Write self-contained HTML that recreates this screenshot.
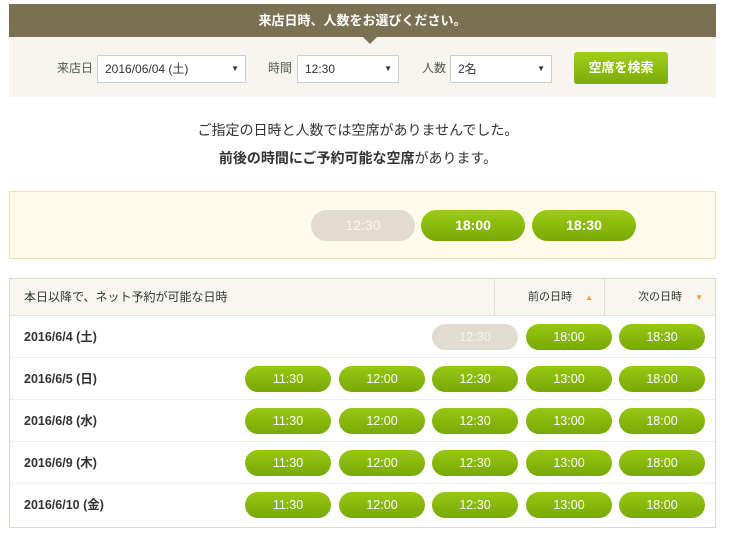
<!DOCTYPE html>
<html><head><meta charset="utf-8"><style>
*{margin:0;padding:0;box-sizing:border-box}
body{width:740px;height:546px;background:#fff;font-family:"Liberation Sans","Noto Sans CJK JP",sans-serif;position:relative;overflow:hidden;color:#333}
.a{position:absolute}
.hd{left:9px;top:4px;width:707px;height:33px;background:#7a7153;color:#fff;font-size:13px;font-weight:bold;text-align:center;line-height:33px}
.tri{left:363px;top:37px;width:0;height:0;border-left:7px solid transparent;border-right:7px solid transparent;border-top:7px solid #7a7153}
.fm{left:9px;top:37px;width:707px;height:60px;background:#f6f5f0}
.lb{font-size:12px;color:#555;top:59px}
.sel{top:55px;height:28px;background:#fff;border:1px solid #ccc;font-size:12px;line-height:26px;padding-left:7px}
.sel:after{content:"▼";position:absolute;right:6px;top:0;font-size:8px}
.sb{left:574px;top:52px;width:94px;height:32px;border-radius:3px;background:linear-gradient(#9fce1a,#7cab0a);color:#fff;font-size:13px;font-weight:bold;text-align:center;line-height:32px}
.msg{left:0;width:716px;text-align:center;font-size:14px}
.yb{left:9px;top:191px;width:707px;height:68px;background:#fffbea;border:1px solid #f0e4a8}
.pb{height:31px;border-radius:16px;background:linear-gradient(#9ccc12,#78a906);color:#fff;font-weight:bold;font-size:14px;text-align:center;line-height:31px;width:104px;top:210px}
.gb{background:#e0ddd0;color:#f6f5f0;font-weight:normal}
.tb{left:9px;top:278px;width:707px;height:250px;border:1px solid #dcdad0}
.th{left:10px;top:279px;width:705px;height:37px;background:#f7f6f1;border-bottom:1px solid #e6e4dc;font-size:12px;line-height:37px}
.row{left:10px;width:705px;height:42px;border-bottom:1px dotted #e0ddd5}
.dt{left:24px;font-size:12.5px;font-weight:bold;line-height:42px}
.b{width:86px;height:26px;border-radius:13px;background:linear-gradient(#98c812,#78a806);color:#fff;font-size:12.5px;text-align:center;line-height:26px}
.b.g{background:#e0ddd0;color:#f6f5f0}
</style></head><body>
<div class="a hd">来店日時、人数をお選びください。</div>
<div class="a fm"></div>
<div class="a tri"></div>
<div class="a lb" style="left:57px">来店日</div>
<div class="a sel" style="left:97px;width:149px">2016/06/04 (土)</div>
<div class="a lb" style="left:268px">時間</div>
<div class="a sel" style="left:297px;width:102px">12:30</div>
<div class="a lb" style="left:422px">人数</div>
<div class="a sel" style="left:450px;width:102px">2名</div>
<div class="a sb">空席を検索</div>
<div class="a msg" style="top:120px">ご指定の日時と人数では空席がありませんでした。</div>
<div class="a msg" style="top:148px"><b>前後の時間にご予約可能な空席</b>があります。</div>
<div class="a yb"></div>
<div class="a pb gb" style="left:311px">12:30</div>
<div class="a pb" style="left:421px">18:00</div>
<div class="a pb" style="left:532px">18:30</div>
<div class="a tb"></div>
<div class="a th"><span class="a" style="left:14px">本日以降で、ネット予約が可能な日時</span>
<span class="a" style="left:484px;top:0;width:1px;height:37px;background:#e0ddd5"></span>
<span class="a" style="left:518px;font-size:11px">前の日時 <span style="color:#f0a030;font-size:8px;margin-left:10px">▲</span></span>
<span class="a" style="left:594px;top:0;width:1px;height:37px;background:#e0ddd5"></span>
<span class="a" style="left:628px;font-size:11px">次の日時 <span style="color:#f0a030;font-size:8px;margin-left:10px">▼</span></span></div>

<div class="a row" style="top:316px"></div>
<div class="a dt" style="top:316px">2016/6/4 (土)</div>
<div class="a b g" style="left:432px;top:324px">12:30</div>
<div class="a b" style="left:526px;top:324px">18:00</div>
<div class="a b" style="left:619px;top:324px">18:30</div>

<div class="a row" style="top:358px"></div>
<div class="a dt" style="top:358px">2016/6/5 (日)</div>
<div class="a b" style="left:245px;top:366px">11:30</div><div class="a b" style="left:339px;top:366px">12:00</div><div class="a b" style="left:432px;top:366px">12:30</div><div class="a b" style="left:526px;top:366px">13:00</div><div class="a b" style="left:619px;top:366px">18:00</div>

<div class="a row" style="top:400px"></div>
<div class="a dt" style="top:400px">2016/6/8 (水)</div>
<div class="a b" style="left:245px;top:408px">11:30</div><div class="a b" style="left:339px;top:408px">12:00</div><div class="a b" style="left:432px;top:408px">12:30</div><div class="a b" style="left:526px;top:408px">13:00</div><div class="a b" style="left:619px;top:408px">18:00</div>

<div class="a row" style="top:442px"></div>
<div class="a dt" style="top:442px">2016/6/9 (木)</div>
<div class="a b" style="left:245px;top:450px">11:30</div><div class="a b" style="left:339px;top:450px">12:00</div><div class="a b" style="left:432px;top:450px">12:30</div><div class="a b" style="left:526px;top:450px">13:00</div><div class="a b" style="left:619px;top:450px">18:00</div>

<div class="a dt" style="top:484px">2016/6/10 (金)</div>
<div class="a b" style="left:245px;top:492px">11:30</div><div class="a b" style="left:339px;top:492px">12:00</div><div class="a b" style="left:432px;top:492px">12:30</div><div class="a b" style="left:526px;top:492px">13:00</div><div class="a b" style="left:619px;top:492px">18:00</div>
</body></html>
